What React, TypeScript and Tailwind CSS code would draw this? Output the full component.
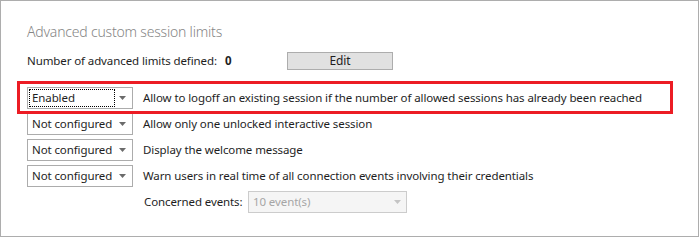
import { ReactNode } from 'react';

const Arrow = ({ disabled }: { disabled?: boolean }) => (
  <svg width="7" height="4" viewBox="0 0 7 4" className="shrink-0">
    <path d="M0 0h7L3.5 4z" fill={disabled ? '#c4c4c4' : '#6b6b6b'} />
  </svg>
);

const Select = ({ value, focused }: { value: string; focused?: boolean }) => (
  <div className="w-[106px] h-[22px] border border-[#acacac] bg-white flex items-center pl-[1px] pr-[3px] shrink-0">
    <div
      className={`flex-1 h-[18px] flex items-center pl-[2px] whitespace-nowrap ${
        focused ? 'border border-dotted border-black' : 'border border-transparent'
      }`}
    >
      {value}
    </div>
    <div className="w-[14px] flex justify-center">
      <Arrow />
    </div>
  </div>
);

const Row = ({ value, children, focused }: { value: string; children: ReactNode; focused?: boolean }) => (
  <div className="flex items-center gap-[10px] h-[22px]">
    <Select value={value} focused={focused} />
    <span className="whitespace-nowrap">{children}</span>
  </div>
);

export default function App() {
  return (
    <div className="w-[700px] h-[238px] bg-white">
      <div
        className="w-[699px] h-[237px] border border-[#adadad] pl-[26px] pt-[21px] text-[11.5px] tracking-[-0.1px] text-[#1e1e1e]"
        style={{ fontFamily: '"Noto Sans", sans-serif' }}
      >
        <h2 className="text-[14px] font-light leading-[20px] tracking-[-0.2px] text-[#858585]">
          Advanced custom session limits
        </h2>

        <div className="flex items-center mt-[10px] h-[18px]">
          <div className="w-[260px] flex items-center">
            <span>Number of advanced limits defined:</span>
            <span className="font-bold ml-[8px]">0</span>
          </div>
          <button className="w-[106px] h-[18px] border border-[#adadad] bg-[#e1e1e1] text-[12px] leading-none">
            Edit
          </button>
        </div>

        <div className="flex flex-col gap-[4px] mt-[17px]">
          <div className="relative">
            <Row value="Enabled" focused>
              Allow to logoff an existing session if the number of allowed sessions has already been reached
            </Row>
            {/* red highlight around the first setting */}
            <div className="absolute left-[-10px] top-[-6px] w-[656px] h-[33px] border-[3px] border-[#ec1c24] pointer-events-none" />
          </div>
          <Row value="Not configured">Allow only one unlocked interactive session</Row>
          <Row value="Not configured">Display the welcome message</Row>
          <Row value="Not configured">Warn users in real time of all connection events involving their credentials</Row>
          <div className="flex items-center h-[22px] pl-[117px]">
            <span className="w-[104px] whitespace-nowrap">Concerned events:</span>
            <div className="w-[159px] h-[22px] border border-[#cccccc] bg-[#f5f5f5] flex items-center justify-between pl-[4px] pr-[5px] text-[#a6a6a6]">
              <span>10 event(s)</span>
              <Arrow disabled />
            </div>
          </div>
        </div>
      </div>
    </div>
  );
}
